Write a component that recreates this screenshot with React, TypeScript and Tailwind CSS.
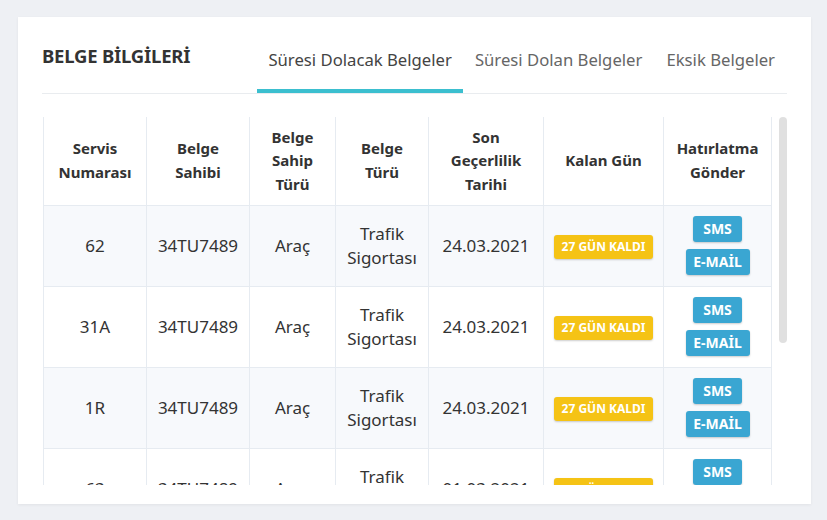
import React from "react";

const cols = [103, 103, 86, 93, 115, 120, 108];
const headers = [
  ["Servis", "Numarası"],
  ["Belge", "Sahibi"],
  ["Belge", "Sahip", "Türü"],
  ["Belge", "Türü"],
  ["Son", "Geçerlilik", "Tarihi"],
  ["Kalan Gün"],
  ["Hatırlatma", "Gönder"],
];
const rows = [
  ["62", "34TU7489", "Araç", "24.03.2021"],
  ["31A", "34TU7489", "Araç", "24.03.2021"],
  ["1R", "34TU7489", "Araç", "24.03.2021"],
  ["63", "34TU7489", "Araç", "01.03.2021"],
];

export default function App() {
  return (
    <div
      className="w-[827px] h-[520px] bg-[#eef0f4] pt-[17px] pl-[18px]"
      style={{ fontFamily: '"Noto Sans", "Open Sans", sans-serif' }}
    >
      <div className="w-[793px] h-[487px] bg-white shadow-[0_1px_3px_rgba(0,0,0,0.06)] px-[24px] pt-[10px]">
        <div className="flex items-end justify-between border-b border-[#e9ecef] h-[67px]">
          <div className="text-[18.5px] font-bold text-[#333] pb-[23px] tracking-[-0.2px]">BELGE BİLGİLERİ</div>
          <div className="flex">
            <div className="px-[11px] pb-[17px] border-b-[4px] border-[#3bbfcf] text-[16.7px] text-[#444] leading-[24px]">
              Süresi Dolacak Belgeler
            </div>
            <div className="px-[12px] pb-[17px] border-b-[4px] border-transparent text-[16.7px] text-[#666] leading-[24px]">
              Süresi Dolan Belgeler
            </div>
            <div className="pl-[12px] pr-[12px] pb-[17px] border-b-[4px] border-transparent text-[16.7px] text-[#666] leading-[24px]">
              Eksik Belgeler
            </div>
          </div>
        </div>
        <div className="flex mt-[23px] ml-[1px]">
          <div className="h-[368px] overflow-hidden">
            <table className="border-collapse text-[#333] text-[17px] table-fixed">
              <thead>
                <tr>
                  {headers.map((h, i) => (
                    <th
                      key={i}
                      style={{ width: cols[i] }}
                      className="h-[88px] border-x border-[#e6ebf1] font-bold text-[15px] leading-[23.5px] text-center align-middle p-0"
                    >
                      {h.map((l, j) => (
                        <div key={j}>{l}</div>
                      ))}
                    </th>
                  ))}
                </tr>
              </thead>
              <tbody>
                {rows.map((r, i) => (
                  <tr key={i} className={i % 2 === 0 ? "bg-[#f7f9fc]" : "bg-white"}>
                    <td className="h-[81px] border border-[#e6ebf1] text-center align-middle p-0">{r[0]}</td>
                    <td className="border border-[#e6ebf1] text-center align-middle p-0">{r[1]}</td>
                    <td className="border border-[#e6ebf1] text-center align-middle p-0">{r[2]}</td>
                    <td className="border border-[#e6ebf1] text-center align-middle leading-[24px] p-0">
                      <div>Trafik</div>
                      <div>Sigortası</div>
                    </td>
                    <td className="border border-[#e6ebf1] text-center align-middle p-0">{r[3]}</td>
                    <td className="border border-[#e6ebf1] text-center align-middle p-0">
                      <span className="inline-block w-[99px] h-[24px] leading-[24px] rounded-[3px] bg-[#f5c315] text-white text-[12px] font-bold shadow-[0_1px_2px_rgba(0,0,0,0.2)] whitespace-nowrap">
                        27 GÜN KALDI
                      </span>
                    </td>
                    <td className="border border-[#e6ebf1] text-center align-middle p-0">
                      <div className="flex flex-col items-center gap-[7px]">
                        <span className="w-[49px] h-[26px] leading-[26px] rounded-[3px] bg-[#3aa6d2] text-white text-[14px] font-bold shadow-[0_1px_2px_rgba(0,0,0,0.2)]">
                          SMS
                        </span>
                        <span className="w-[64px] h-[26px] leading-[26px] rounded-[3px] bg-[#3aa6d2] text-white text-[14px] font-bold shadow-[0_1px_2px_rgba(0,0,0,0.2)]">
                          E-MAİL
                        </span>
                      </div>
                    </td>
                  </tr>
                ))}
              </tbody>
            </table>
          </div>
          <div className="ml-[7px] w-[8px]">
            <div className="h-[226px] rounded-full bg-[#e0e0e0]" />
          </div>
        </div>
      </div>
    </div>
  );
}
